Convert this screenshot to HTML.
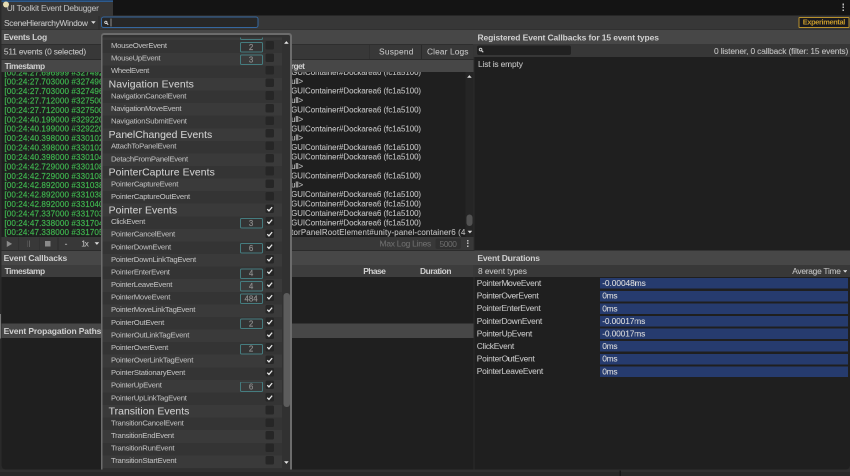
<!DOCTYPE html>
<html lang="en"><head><meta charset="utf-8"><title>UI Toolkit Event Debugger</title>
<style>
html,body{margin:0;padding:0;background:#2a2a2a;overflow:hidden;}
body{width:850px;height:476px;position:relative;overflow:hidden;font-family:"Liberation Sans",sans-serif;}
div,span.t,svg{position:absolute;display:block;}
span.t{white-space:pre;}
#root{left:0;top:0;width:1700px;height:952px;overflow:hidden;transform-origin:0 0;transform:scale(0.5);will-change:transform;}
</style></head><body>
<div id="root">
<div style="left:0.00px;top:0.00px;width:1700.00px;height:952.00px;background:#2a2a2a;"></div>
<div style="left:2.60px;top:0.00px;width:1697.40px;height:31.00px;background:#141414;"></div>
<div style="left:2.80px;top:31.00px;width:1697.20px;height:908.20px;background:#373737;border-radius:0.00px 0.00px 8.00px 8.00px;"></div>
<div style="left:2.80px;top:0.00px;width:223.60px;height:32.00px;background:#373737;"></div>
<div style="left:2.80px;top:0.00px;width:223.60px;height:4.00px;background:#2e5b8d;"></div>
<div style="left:2.80px;top:0.00px;width:223.60px;height:1.30px;background:#1c3350;"></div>
<span class="t" style="left:13.40px;top:5.38px;font-size:16.80px;line-height:24px;color:#bcbcbc;letter-spacing:-0.428px;-webkit-text-stroke:0.14px #bcbcbc;">UI Toolkit Event Debugger</span>
<div style="left:6.20px;top:3.00px;width:12.00px;height:12.00px;background:#e6dcb3;border-radius:50%;"></div>
<div style="left:1684.60px;top:7.40px;width:3.20px;height:3.20px;background:#bdbdbd;"></div>
<div style="left:1684.60px;top:13.00px;width:3.20px;height:3.20px;background:#bdbdbd;"></div>
<div style="left:1684.60px;top:18.60px;width:3.20px;height:3.20px;background:#bdbdbd;"></div>
<div style="left:0.00px;top:628.40px;width:2.20px;height:48.40px;background:#7a7a7a;"></div>
<span class="t" style="left:8.00px;top:34.78px;font-size:16.80px;line-height:24px;color:#c4c4c4;letter-spacing:-0.593px;-webkit-text-stroke:0.14px #c4c4c4;">SceneHierarchyWindow</span>
<svg style="left:181.60px;top:42.20px" width="9.60" height="6.00" viewBox="0 0 10 6"><path d="M0.2 0.3h9.6L5 5.9z" fill="#dcdcdc"/></svg>
<div style="left:196.80px;top:32.00px;width:1.80px;height:26.80px;background:#2b2b2b;"></div>
<div style="left:202.00px;top:33.10px;width:315.40px;height:22.70px;background:#272727;border:2.40px solid #35679f;box-sizing:border-box;border-radius:5.20px;"></div>
<svg style="left:207.60px;top:41.20px" width="9.20" height="9.20" viewBox="0 0 10 10"><circle cx="4" cy="4" r="2.5" fill="none" stroke="#e0e0e0" stroke-width="1.9"/><path d="M6 6L9.2 9.2" stroke="#e0e0e0" stroke-width="2.2"/></svg>
<div style="left:221.00px;top:36.60px;width:2.20px;height:16.80px;background:#8c8c8c;"></div>
<div style="left:1597.40px;top:34.00px;width:101.60px;height:21.60px;background:#17181f;border:2.00px solid #b8912c;box-sizing:border-box;border-radius:2.00px;"></div>
<span class="t" style="left:1605.60px;top:34.09px;font-size:14.80px;line-height:21px;color:#c79a2a;letter-spacing:-0.723px;font-weight:bold;">Experimental</span>
<div style="left:2.80px;top:59.00px;width:1697.20px;height:1.60px;background:#292929;"></div>
<div style="left:2.80px;top:60.40px;width:944.80px;height:28.00px;background:#474747;"></div>
<span class="t" style="left:7.20px;top:63.05px;font-size:17.00px;line-height:24px;color:#d0d0d0;letter-spacing:-0.492px;font-weight:bold;">Events Log</span>
<div style="left:2.80px;top:88.40px;width:944.80px;height:30.80px;background:#383838;"></div>
<div style="left:2.80px;top:88.40px;width:944.80px;height:1.40px;background:#2e2e2e;"></div>
<span class="t" style="left:7.80px;top:92.38px;font-size:16.80px;line-height:24px;color:#c4c4c4;letter-spacing:-0.391px;-webkit-text-stroke:0.14px #c4c4c4;">511 events (0 selected)</span>
<div style="left:738.60px;top:89.60px;width:1.80px;height:28.80px;background:#2a2a2a;"></div>
<div style="left:842.40px;top:89.60px;width:1.80px;height:28.80px;background:#2a2a2a;"></div>
<span class="t" style="left:758.00px;top:92.18px;font-size:16.80px;line-height:24px;color:#c4c4c4;letter-spacing:0.446px;-webkit-text-stroke:0.14px #c4c4c4;">Suspend</span>
<span class="t" style="left:854.00px;top:92.18px;font-size:16.80px;line-height:24px;color:#c4c4c4;letter-spacing:0.195px;-webkit-text-stroke:0.14px #c4c4c4;">Clear Logs</span>
<div style="left:2.80px;top:119.20px;width:944.80px;height:24.80px;background:#474747;"></div>
<div style="left:2.80px;top:118.40px;width:944.80px;height:1.60px;background:#2a2a2a;"></div>
<span class="t" style="left:9.20px;top:120.58px;font-size:16.80px;line-height:24px;color:#d0d0d0;letter-spacing:-0.899px;font-weight:bold;">Timestamp</span>
<span class="t" style="left:565.20px;top:120.58px;font-size:16.80px;line-height:24px;color:#d0d0d0;letter-spacing:-1.060px;font-weight:bold;">Target</span>
<div id="log" style="left:2.80px;top:144.00px;width:944.80px;height:329.80px;background:#1f1f1f;overflow:hidden;">
<span class="t" style="left:6.00px;top:-10.49px;font-size:16.20px;line-height:23px;color:#3fb54f;letter-spacing:0.205px;-webkit-text-stroke:0.34px #3fb54f;">[00:24:27.696999 #327492] MouseMoveEvent</span>
<span class="t" style="left:561.96px;top:-10.42px;font-size:15.80px;line-height:22px;color:#bdbdbd;letter-spacing:-0.054px;-webkit-text-stroke:0.24px #bdbdbd;">IMGUIContainer#Dockarea6 (fc1a5100)</span>
<span class="t" style="left:6.00px;top:8.33px;font-size:16.20px;line-height:23px;color:#3fb54f;letter-spacing:0.205px;-webkit-text-stroke:0.34px #3fb54f;">[00:24:27.703000 #327496] PointerMoveEvent</span>
<span class="t" style="left:562.08px;top:8.40px;font-size:15.80px;line-height:22px;color:#bdbdbd;letter-spacing:-0.345px;-webkit-text-stroke:0.24px #bdbdbd;">&lt;null&gt;</span>
<span class="t" style="left:6.00px;top:27.15px;font-size:16.20px;line-height:23px;color:#3fb54f;letter-spacing:0.205px;-webkit-text-stroke:0.34px #3fb54f;">[00:24:27.703000 #327496] MouseMoveEvent</span>
<span class="t" style="left:561.96px;top:27.22px;font-size:15.80px;line-height:22px;color:#bdbdbd;letter-spacing:-0.054px;-webkit-text-stroke:0.24px #bdbdbd;">IMGUIContainer#Dockarea6 (fc1a5100)</span>
<span class="t" style="left:6.00px;top:45.97px;font-size:16.20px;line-height:23px;color:#3fb54f;letter-spacing:0.205px;-webkit-text-stroke:0.34px #3fb54f;">[00:24:27.712000 #327500] PointerMoveEvent</span>
<span class="t" style="left:562.08px;top:46.04px;font-size:15.80px;line-height:22px;color:#bdbdbd;letter-spacing:-0.345px;-webkit-text-stroke:0.24px #bdbdbd;">&lt;null&gt;</span>
<span class="t" style="left:6.00px;top:64.79px;font-size:16.20px;line-height:23px;color:#3fb54f;letter-spacing:0.205px;-webkit-text-stroke:0.34px #3fb54f;">[00:24:27.712000 #327500] MouseMoveEvent</span>
<span class="t" style="left:561.96px;top:64.86px;font-size:15.80px;line-height:22px;color:#bdbdbd;letter-spacing:-0.054px;-webkit-text-stroke:0.24px #bdbdbd;">IMGUIContainer#Dockarea6 (fc1a5100)</span>
<span class="t" style="left:6.00px;top:83.61px;font-size:16.20px;line-height:23px;color:#3fb54f;letter-spacing:0.205px;-webkit-text-stroke:0.34px #3fb54f;">[00:24:40.199000 #329220] PointerMoveEvent</span>
<span class="t" style="left:562.08px;top:83.68px;font-size:15.80px;line-height:22px;color:#bdbdbd;letter-spacing:-0.345px;-webkit-text-stroke:0.24px #bdbdbd;">&lt;null&gt;</span>
<span class="t" style="left:6.00px;top:102.43px;font-size:16.20px;line-height:23px;color:#3fb54f;letter-spacing:0.205px;-webkit-text-stroke:0.34px #3fb54f;">[00:24:40.199000 #329220] MouseMoveEvent</span>
<span class="t" style="left:561.96px;top:102.50px;font-size:15.80px;line-height:22px;color:#bdbdbd;letter-spacing:-0.054px;-webkit-text-stroke:0.24px #bdbdbd;">IMGUIContainer#Dockarea6 (fc1a5100)</span>
<span class="t" style="left:6.00px;top:121.25px;font-size:16.20px;line-height:23px;color:#3fb54f;letter-spacing:0.205px;-webkit-text-stroke:0.34px #3fb54f;">[00:24:40.398000 #330102] PointerMoveEvent</span>
<span class="t" style="left:562.08px;top:121.32px;font-size:15.80px;line-height:22px;color:#bdbdbd;letter-spacing:-0.345px;-webkit-text-stroke:0.24px #bdbdbd;">&lt;null&gt;</span>
<span class="t" style="left:6.00px;top:140.07px;font-size:16.20px;line-height:23px;color:#3fb54f;letter-spacing:0.205px;-webkit-text-stroke:0.34px #3fb54f;">[00:24:40.398000 #330102] MouseMoveEvent</span>
<span class="t" style="left:561.96px;top:140.14px;font-size:15.80px;line-height:22px;color:#bdbdbd;letter-spacing:-0.054px;-webkit-text-stroke:0.24px #bdbdbd;">IMGUIContainer#Dockarea6 (fc1a5100)</span>
<span class="t" style="left:6.00px;top:158.89px;font-size:16.20px;line-height:23px;color:#3fb54f;letter-spacing:0.205px;-webkit-text-stroke:0.34px #3fb54f;">[00:24:40.398000 #330104] MouseLeaveWindowEvent</span>
<span class="t" style="left:561.96px;top:158.96px;font-size:15.80px;line-height:22px;color:#bdbdbd;letter-spacing:-0.054px;-webkit-text-stroke:0.24px #bdbdbd;">IMGUIContainer#Dockarea6 (fc1a5100)</span>
<span class="t" style="left:6.00px;top:177.71px;font-size:16.20px;line-height:23px;color:#3fb54f;letter-spacing:0.205px;-webkit-text-stroke:0.34px #3fb54f;">[00:24:42.729000 #330108] PointerMoveEvent</span>
<span class="t" style="left:562.08px;top:177.78px;font-size:15.80px;line-height:22px;color:#bdbdbd;letter-spacing:-0.345px;-webkit-text-stroke:0.24px #bdbdbd;">&lt;null&gt;</span>
<span class="t" style="left:6.00px;top:196.53px;font-size:16.20px;line-height:23px;color:#3fb54f;letter-spacing:0.205px;-webkit-text-stroke:0.34px #3fb54f;">[00:24:42.729000 #330108] MouseMoveEvent</span>
<span class="t" style="left:561.96px;top:196.60px;font-size:15.80px;line-height:22px;color:#bdbdbd;letter-spacing:-0.054px;-webkit-text-stroke:0.24px #bdbdbd;">IMGUIContainer#Dockarea6 (fc1a5100)</span>
<span class="t" style="left:6.00px;top:215.35px;font-size:16.20px;line-height:23px;color:#3fb54f;letter-spacing:0.205px;-webkit-text-stroke:0.34px #3fb54f;">[00:24:42.892000 #331038] PointerMoveEvent</span>
<span class="t" style="left:562.08px;top:215.42px;font-size:15.80px;line-height:22px;color:#bdbdbd;letter-spacing:-0.345px;-webkit-text-stroke:0.24px #bdbdbd;">&lt;null&gt;</span>
<span class="t" style="left:6.00px;top:234.17px;font-size:16.20px;line-height:23px;color:#3fb54f;letter-spacing:0.205px;-webkit-text-stroke:0.34px #3fb54f;">[00:24:42.892000 #331038] MouseMoveEvent</span>
<span class="t" style="left:561.96px;top:234.24px;font-size:15.80px;line-height:22px;color:#bdbdbd;letter-spacing:-0.054px;-webkit-text-stroke:0.24px #bdbdbd;">IMGUIContainer#Dockarea6 (fc1a5100)</span>
<span class="t" style="left:6.00px;top:252.99px;font-size:16.20px;line-height:23px;color:#3fb54f;letter-spacing:0.205px;-webkit-text-stroke:0.34px #3fb54f;">[00:24:42.892000 #331040] MouseLeaveWindowEvent</span>
<span class="t" style="left:561.96px;top:253.06px;font-size:15.80px;line-height:22px;color:#bdbdbd;letter-spacing:-0.054px;-webkit-text-stroke:0.24px #bdbdbd;">IMGUIContainer#Dockarea6 (fc1a5100)</span>
<span class="t" style="left:6.00px;top:271.81px;font-size:16.20px;line-height:23px;color:#3fb54f;letter-spacing:0.205px;-webkit-text-stroke:0.34px #3fb54f;">[00:24:47.337000 #331703] MouseEnterWindowEvent</span>
<span class="t" style="left:561.96px;top:271.88px;font-size:15.80px;line-height:22px;color:#bdbdbd;letter-spacing:-0.054px;-webkit-text-stroke:0.24px #bdbdbd;">IMGUIContainer#Dockarea6 (fc1a5100)</span>
<span class="t" style="left:6.00px;top:290.63px;font-size:16.20px;line-height:23px;color:#3fb54f;letter-spacing:0.205px;-webkit-text-stroke:0.34px #3fb54f;">[00:24:47.338000 #331704] MouseMoveEvent</span>
<span class="t" style="left:561.96px;top:290.70px;font-size:15.80px;line-height:22px;color:#bdbdbd;letter-spacing:-0.054px;-webkit-text-stroke:0.24px #bdbdbd;">IMGUIContainer#Dockarea6 (fc1a5100)</span>
<span class="t" style="left:6.00px;top:309.45px;font-size:16.20px;line-height:23px;color:#3fb54f;letter-spacing:0.205px;-webkit-text-stroke:0.34px #3fb54f;">[00:24:47.338000 #331705] PointerOverEvent</span>
<span class="t" style="left:555.55px;top:309.52px;font-size:15.80px;line-height:22px;color:#bdbdbd;letter-spacing:0.337px;-webkit-text-stroke:0.24px #bdbdbd;">EditorPanelRootElement#unity-panel-container6 (4f2a9c00)</span>
<div style="left:927.80px;top:0.00px;width:17.00px;height:329.80px;background:#252525;"></div>
<div style="left:930.00px;top:285.20px;width:12.40px;height:22.40px;background:#525252;border-radius:6.20px;"></div>
<svg style="left:931.60px;top:6.40px" width="9.60" height="6.00" viewBox="0 0 10 6"><path d="M0.2 5.7h9.6L5 0.1z" fill="#dcdcdc"/></svg>
<svg style="left:931.80px;top:316.60px" width="9.60" height="6.00" viewBox="0 0 10 6"><path d="M0.2 0.3h9.6L5 5.9z" fill="#dcdcdc"/></svg>
</div>
<div style="left:2.80px;top:474.00px;width:944.80px;height:27.00px;background:#383838;"></div>
<div style="left:36.60px;top:474.60px;width:1.80px;height:26.00px;background:#2c2c2c;"></div>
<div style="left:77.60px;top:474.60px;width:1.80px;height:26.00px;background:#2c2c2c;"></div>
<div style="left:114.80px;top:474.60px;width:1.80px;height:26.00px;background:#2c2c2c;"></div>
<svg style="left:13.20px;top:480.80px" width="11.60" height="13.60" viewBox="0 0 6 7"><path d="M0.3 0.3L5.8 3.5L0.3 6.7z" fill="#8a8a8a"/></svg>
<div style="left:53.70px;top:481.00px;width:1.80px;height:13.20px;background:#606060;"></div>
<div style="left:58.30px;top:481.00px;width:1.80px;height:13.20px;background:#606060;"></div>
<div style="left:90.40px;top:482.40px;width:10.20px;height:10.20px;background:#8a8a8a;"></div>
<span class="t" style="left:129.20px;top:475.58px;font-size:16.80px;line-height:24px;color:#bdbdbd;-webkit-text-stroke:0.14px #bdbdbd;">-</span>
<span class="t" style="left:162.40px;top:476.38px;font-size:16.80px;line-height:24px;color:#c0c0c0;letter-spacing:-2.544px;-webkit-text-stroke:0.14px #c0c0c0;">1x</span>
<svg style="left:189.20px;top:484.40px" width="9.60" height="6.00" viewBox="0 0 10 6"><path d="M0.2 0.3h9.6L5 5.9z" fill="#dcdcdc"/></svg>
<span class="t" style="left:759.20px;top:476.38px;font-size:16.80px;line-height:24px;color:#6e6e6e;letter-spacing:-0.489px;-webkit-text-stroke:0.14px #6e6e6e;">Max Log Lines</span>
<div style="left:871.20px;top:476.80px;width:50.40px;height:20.80px;background:#303030;border-radius:4.00px;"></div>
<span class="t" style="left:878.90px;top:476.58px;font-size:16.80px;line-height:24px;color:#6a6a6a;letter-spacing:-0.792px;-webkit-text-stroke:0.14px #6a6a6a;">5000</span>
<div style="left:934.00px;top:479.60px;width:3.20px;height:3.20px;background:#bdbdbd;"></div>
<div style="left:934.00px;top:485.20px;width:3.20px;height:3.20px;background:#bdbdbd;"></div>
<div style="left:934.00px;top:490.80px;width:3.20px;height:3.20px;background:#bdbdbd;"></div>
<div style="left:2.80px;top:500.20px;width:1697.20px;height:1.60px;background:#2b2b2b;"></div>
<div style="left:2.80px;top:501.60px;width:944.80px;height:28.20px;background:#474747;"></div>
<span class="t" style="left:7.20px;top:504.85px;font-size:17.00px;line-height:24px;color:#d0d0d0;letter-spacing:-0.229px;font-weight:bold;">Event Callbacks</span>
<div style="left:2.80px;top:529.80px;width:944.80px;height:23.80px;background:#3d3d3d;"></div>
<span class="t" style="left:9.20px;top:530.78px;font-size:16.80px;line-height:24px;color:#d0d0d0;letter-spacing:-0.899px;font-weight:bold;">Timestamp</span>
<span class="t" style="left:726.40px;top:531.38px;font-size:16.80px;line-height:24px;color:#d0d0d0;letter-spacing:-1.025px;font-weight:bold;">Phase</span>
<span class="t" style="left:840.00px;top:531.38px;font-size:16.80px;line-height:24px;color:#d0d0d0;letter-spacing:-0.866px;font-weight:bold;">Duration</span>
<div style="left:2.80px;top:553.60px;width:944.80px;height:93.20px;background:#1f1f1f;"></div>
<div style="left:2.80px;top:646.80px;width:944.80px;height:29.20px;background:#474747;"></div>
<span class="t" style="left:7.20px;top:650.85px;font-size:17.00px;line-height:24px;color:#d0d0d0;letter-spacing:-0.255px;font-weight:bold;">Event Propagation Paths</span>
<div style="left:2.80px;top:676.00px;width:944.80px;height:263.20px;background:#1f1f1f;border-radius:0.00px 0.00px 0.00px 8.00px;"></div>
<div style="left:946.60px;top:60.40px;width:2.60px;height:878.80px;background:#2b2b2b;"></div>
<div style="left:946.40px;top:60.40px;width:3.00px;height:28.00px;background:#474747;"></div>
<div style="left:946.40px;top:88.40px;width:3.00px;height:25.60px;background:#363636;"></div>
<div style="left:946.40px;top:501.60px;width:3.00px;height:28.20px;background:#474747;"></div>
<div style="left:946.40px;top:529.80px;width:3.00px;height:23.80px;background:#393939;"></div>
<div style="left:949.00px;top:60.40px;width:751.00px;height:28.00px;background:#474747;"></div>
<span class="t" style="left:955.00px;top:63.85px;font-size:17.00px;line-height:24px;color:#d0d0d0;letter-spacing:-0.211px;font-weight:bold;">Registered Event Callbacks for 15 event types</span>
<div style="left:949.00px;top:88.40px;width:751.00px;height:25.60px;background:#373737;"></div>
<div style="left:954.00px;top:90.60px;width:188.00px;height:19.20px;background:#212121;border-radius:4.00px;"></div>
<svg style="left:957.20px;top:95.40px" width="10.40" height="10.40" viewBox="0 0 10 10"><circle cx="4" cy="4" r="2.5" fill="none" stroke="#d6d6d6" stroke-width="1.9"/><path d="M6 6L9.2 9.2" stroke="#d6d6d6" stroke-width="2.2"/></svg>
<span class="t" style="left:1428.00px;top:90.78px;font-size:16.80px;line-height:24px;color:#c4c4c4;letter-spacing:-0.299px;-webkit-text-stroke:0.14px #c4c4c4;">0 listener, 0 callback (filter: 15 events)</span>
<div style="left:949.00px;top:114.00px;width:751.00px;height:387.00px;background:#1f1f1f;"></div>
<span class="t" style="left:956.00px;top:117.18px;font-size:16.80px;line-height:24px;color:#c4c4c4;letter-spacing:-0.280px;-webkit-text-stroke:0.14px #c4c4c4;">List is empty</span>
<div style="left:949.00px;top:500.80px;width:751.00px;height:29.00px;background:#474747;"></div>
<span class="t" style="left:954.80px;top:505.25px;font-size:17.00px;line-height:24px;color:#d0d0d0;letter-spacing:-0.369px;font-weight:bold;">Event Durations</span>
<div style="left:949.00px;top:529.80px;width:751.00px;height:23.80px;background:#383838;"></div>
<span class="t" style="left:956.00px;top:531.38px;font-size:16.80px;line-height:24px;color:#c4c4c4;letter-spacing:-0.161px;-webkit-text-stroke:0.14px #c4c4c4;">8 event types</span>
<span class="t" style="left:1584.40px;top:531.38px;font-size:16.80px;line-height:24px;color:#c4c4c4;letter-spacing:-0.522px;-webkit-text-stroke:0.14px #c4c4c4;">Average Time</span>
<svg style="left:1685.60px;top:539.60px" width="8.80" height="5.60" viewBox="0 0 10 6"><path d="M0.2 0.3h9.6L5 5.9z" fill="#dcdcdc"/></svg>
<div style="left:949.00px;top:553.60px;width:751.00px;height:385.60px;background:#1f1f1f;border-radius:0.00px 0.00px 8.00px 0.00px;"></div>
<span class="t" style="left:953.60px;top:554.98px;font-size:16.80px;line-height:24px;color:#c4c4c4;letter-spacing:-0.552px;-webkit-text-stroke:0.14px #c4c4c4;">PointerMoveEvent</span>
<div style="left:1199.80px;top:556.40px;width:496.60px;height:21.10px;background:#263b6e;"></div>
<span class="t" style="left:1204.40px;top:555.18px;font-size:16.80px;line-height:24px;color:#dcdcdc;letter-spacing:-0.147px;-webkit-text-stroke:0.14px #dcdcdc;">-0.00048ms</span>
<span class="t" style="left:953.60px;top:580.18px;font-size:16.80px;line-height:24px;color:#c4c4c4;letter-spacing:-0.573px;-webkit-text-stroke:0.14px #c4c4c4;">PointerOverEvent</span>
<div style="left:1199.80px;top:581.60px;width:496.60px;height:21.10px;background:#263b6e;"></div>
<span class="t" style="left:1204.40px;top:580.38px;font-size:16.80px;line-height:24px;color:#dcdcdc;letter-spacing:-0.469px;-webkit-text-stroke:0.14px #dcdcdc;">0ms</span>
<span class="t" style="left:953.60px;top:605.38px;font-size:16.80px;line-height:24px;color:#c4c4c4;letter-spacing:-0.522px;-webkit-text-stroke:0.14px #c4c4c4;">PointerEnterEvent</span>
<div style="left:1199.80px;top:606.80px;width:496.60px;height:21.10px;background:#263b6e;"></div>
<span class="t" style="left:1204.40px;top:605.58px;font-size:16.80px;line-height:24px;color:#dcdcdc;letter-spacing:-0.469px;-webkit-text-stroke:0.14px #dcdcdc;">0ms</span>
<span class="t" style="left:953.60px;top:630.58px;font-size:16.80px;line-height:24px;color:#c4c4c4;letter-spacing:-0.543px;-webkit-text-stroke:0.14px #c4c4c4;">PointerDownEvent</span>
<div style="left:1199.80px;top:632.00px;width:496.60px;height:21.10px;background:#263b6e;"></div>
<span class="t" style="left:1204.40px;top:630.78px;font-size:16.80px;line-height:24px;color:#dcdcdc;letter-spacing:-0.258px;-webkit-text-stroke:0.14px #dcdcdc;">-0.00017ms</span>
<span class="t" style="left:953.60px;top:655.78px;font-size:16.80px;line-height:24px;color:#c4c4c4;letter-spacing:-0.513px;-webkit-text-stroke:0.14px #c4c4c4;">PointerUpEvent</span>
<div style="left:1199.80px;top:657.20px;width:496.60px;height:21.10px;background:#263b6e;"></div>
<span class="t" style="left:1204.40px;top:655.98px;font-size:16.80px;line-height:24px;color:#dcdcdc;letter-spacing:-0.258px;-webkit-text-stroke:0.14px #dcdcdc;">-0.00017ms</span>
<span class="t" style="left:953.60px;top:680.98px;font-size:16.80px;line-height:24px;color:#c4c4c4;letter-spacing:-0.484px;-webkit-text-stroke:0.14px #c4c4c4;">ClickEvent</span>
<div style="left:1199.80px;top:682.40px;width:496.60px;height:21.10px;background:#263b6e;"></div>
<span class="t" style="left:1204.40px;top:681.18px;font-size:16.80px;line-height:24px;color:#dcdcdc;letter-spacing:-0.469px;-webkit-text-stroke:0.14px #dcdcdc;">0ms</span>
<span class="t" style="left:953.60px;top:706.18px;font-size:16.80px;line-height:24px;color:#c4c4c4;letter-spacing:-0.519px;-webkit-text-stroke:0.14px #c4c4c4;">PointerOutEvent</span>
<div style="left:1199.80px;top:707.60px;width:496.60px;height:21.10px;background:#263b6e;"></div>
<span class="t" style="left:1204.40px;top:706.38px;font-size:16.80px;line-height:24px;color:#dcdcdc;letter-spacing:-0.469px;-webkit-text-stroke:0.14px #dcdcdc;">0ms</span>
<span class="t" style="left:953.60px;top:731.38px;font-size:16.80px;line-height:24px;color:#c4c4c4;letter-spacing:-0.560px;-webkit-text-stroke:0.14px #c4c4c4;">PointerLeaveEvent</span>
<div style="left:1199.80px;top:732.80px;width:496.60px;height:21.10px;background:#263b6e;"></div>
<span class="t" style="left:1204.40px;top:731.58px;font-size:16.80px;line-height:24px;color:#dcdcdc;letter-spacing:-0.469px;-webkit-text-stroke:0.14px #dcdcdc;">0ms</span>
<div id="popclip" style="left:0.00px;top:0.00px;width:1700.00px;height:939.20px;overflow:hidden;">
<div style="left:201.80px;top:66.20px;width:381.80px;height:920.00px;background:#6c6c6c;border-radius:6.40px;"></div>
<div id="pop" style="left:205.40px;top:69.80px;width:374.60px;height:900.00px;overflow:hidden;background:#313131;border-radius:3.20px;">
<div id="popscroll" style="left:0.00px;top:4.80px;width:374.60px;height:861.60px;overflow:hidden;">
<div style="left:0.00px;top:-19.36px;width:358.60px;height:25.26px;background:#3a3a3a;"></div>
<span class="t" style="left:16.60px;top:-19.66px;font-size:15.40px;line-height:22px;color:#bcbcbc;letter-spacing:-0.531px;-webkit-text-stroke:0.12px #bcbcbc;">MouseMoveEvent</span>
<div style="left:275.00px;top:-15.96px;width:45.60px;height:20.90px;background:transparent;border:2.00px solid #457c7f;box-sizing:border-box;border-radius:3.20px;"></div>
<span class="t" style="left:288.01px;top:-16.22px;font-size:15.80px;line-height:22px;color:#909090;-webkit-text-stroke:0.32px #909090;">12</span>
<div style="left:325.20px;top:-17.96px;width:17.00px;height:17.20px;background:#262626;border-radius:3.00px;"></div>
<div style="left:0.00px;top:5.80px;width:358.60px;height:25.26px;background:#343434;"></div>
<span class="t" style="left:16.60px;top:5.50px;font-size:15.40px;line-height:22px;color:#bcbcbc;letter-spacing:-0.537px;-webkit-text-stroke:0.12px #bcbcbc;">MouseOverEvent</span>
<div style="left:275.00px;top:9.20px;width:45.60px;height:20.90px;background:transparent;border:2.00px solid #457c7f;box-sizing:border-box;border-radius:3.20px;"></div>
<span class="t" style="left:292.41px;top:8.94px;font-size:15.80px;line-height:22px;color:#909090;-webkit-text-stroke:0.32px #909090;">2</span>
<div style="left:325.20px;top:7.20px;width:17.00px;height:17.20px;background:#262626;border-radius:3.00px;"></div>
<div style="left:0.00px;top:30.96px;width:358.60px;height:25.26px;background:#3a3a3a;"></div>
<span class="t" style="left:16.60px;top:30.66px;font-size:15.40px;line-height:22px;color:#bcbcbc;letter-spacing:-0.572px;-webkit-text-stroke:0.12px #bcbcbc;">MouseUpEvent</span>
<div style="left:275.00px;top:34.36px;width:45.60px;height:20.90px;background:transparent;border:2.00px solid #457c7f;box-sizing:border-box;border-radius:3.20px;"></div>
<span class="t" style="left:292.41px;top:34.10px;font-size:15.80px;line-height:22px;color:#909090;-webkit-text-stroke:0.32px #909090;">3</span>
<div style="left:325.20px;top:32.36px;width:17.00px;height:17.20px;background:#262626;border-radius:3.00px;"></div>
<div style="left:0.00px;top:56.12px;width:358.60px;height:25.26px;background:#343434;"></div>
<span class="t" style="left:16.60px;top:55.82px;font-size:15.40px;line-height:22px;color:#bcbcbc;letter-spacing:-0.715px;-webkit-text-stroke:0.12px #bcbcbc;">WheelEvent</span>
<div style="left:325.20px;top:57.52px;width:17.00px;height:17.20px;background:#262626;border-radius:3.00px;"></div>
<div style="left:0.00px;top:81.28px;width:358.60px;height:25.26px;background:#3a3a3a;"></div>
<span class="t" style="left:11.80px;top:78.74px;font-size:20.80px;line-height:29px;color:#cfcfcf;letter-spacing:0.184px;-webkit-text-stroke:0.14px #cfcfcf;">Navigation Events</span>
<div style="left:325.20px;top:82.68px;width:17.00px;height:17.20px;background:#262626;border-radius:3.00px;"></div>
<div style="left:0.00px;top:106.44px;width:358.60px;height:25.26px;background:#343434;"></div>
<span class="t" style="left:16.60px;top:106.14px;font-size:15.40px;line-height:22px;color:#bcbcbc;letter-spacing:-0.454px;-webkit-text-stroke:0.12px #bcbcbc;">NavigationCancelEvent</span>
<div style="left:325.20px;top:107.84px;width:17.00px;height:17.20px;background:#262626;border-radius:3.00px;"></div>
<div style="left:0.00px;top:131.60px;width:358.60px;height:25.26px;background:#3a3a3a;"></div>
<span class="t" style="left:16.60px;top:131.30px;font-size:15.40px;line-height:22px;color:#bcbcbc;letter-spacing:-0.478px;-webkit-text-stroke:0.12px #bcbcbc;">NavigationMoveEvent</span>
<div style="left:325.20px;top:133.00px;width:17.00px;height:17.20px;background:#262626;border-radius:3.00px;"></div>
<div style="left:0.00px;top:156.76px;width:358.60px;height:25.26px;background:#343434;"></div>
<span class="t" style="left:16.60px;top:156.46px;font-size:15.40px;line-height:22px;color:#bcbcbc;letter-spacing:-0.404px;-webkit-text-stroke:0.12px #bcbcbc;">NavigationSubmitEvent</span>
<div style="left:325.20px;top:158.16px;width:17.00px;height:17.20px;background:#262626;border-radius:3.00px;"></div>
<div style="left:0.00px;top:181.92px;width:358.60px;height:25.26px;background:#3a3a3a;"></div>
<span class="t" style="left:11.80px;top:179.38px;font-size:20.80px;line-height:29px;color:#cfcfcf;letter-spacing:0.011px;-webkit-text-stroke:0.14px #cfcfcf;">PanelChanged Events</span>
<div style="left:325.20px;top:183.32px;width:17.00px;height:17.20px;background:#262626;border-radius:3.00px;"></div>
<div style="left:0.00px;top:207.08px;width:358.60px;height:25.26px;background:#343434;"></div>
<span class="t" style="left:16.60px;top:206.78px;font-size:15.40px;line-height:22px;color:#bcbcbc;letter-spacing:-0.457px;-webkit-text-stroke:0.12px #bcbcbc;">AttachToPanelEvent</span>
<div style="left:325.20px;top:208.48px;width:17.00px;height:17.20px;background:#262626;border-radius:3.00px;"></div>
<div style="left:0.00px;top:232.24px;width:358.60px;height:25.26px;background:#3a3a3a;"></div>
<span class="t" style="left:16.60px;top:231.94px;font-size:15.40px;line-height:22px;color:#bcbcbc;letter-spacing:-0.482px;-webkit-text-stroke:0.12px #bcbcbc;">DetachFromPanelEvent</span>
<div style="left:325.20px;top:233.64px;width:17.00px;height:17.20px;background:#262626;border-radius:3.00px;"></div>
<div style="left:0.00px;top:257.40px;width:358.60px;height:25.26px;background:#343434;"></div>
<span class="t" style="left:11.80px;top:254.86px;font-size:20.80px;line-height:29px;color:#cfcfcf;letter-spacing:0.156px;-webkit-text-stroke:0.14px #cfcfcf;">PointerCapture Events</span>
<div style="left:325.20px;top:258.80px;width:17.00px;height:17.20px;background:#262626;border-radius:3.00px;"></div>
<div style="left:0.00px;top:282.56px;width:358.60px;height:25.26px;background:#3a3a3a;"></div>
<span class="t" style="left:16.60px;top:282.26px;font-size:15.40px;line-height:22px;color:#bcbcbc;letter-spacing:-0.445px;-webkit-text-stroke:0.12px #bcbcbc;">PointerCaptureEvent</span>
<div style="left:325.20px;top:283.96px;width:17.00px;height:17.20px;background:#262626;border-radius:3.00px;"></div>
<div style="left:0.00px;top:307.72px;width:358.60px;height:25.26px;background:#343434;"></div>
<span class="t" style="left:16.60px;top:307.42px;font-size:15.40px;line-height:22px;color:#bcbcbc;letter-spacing:-0.447px;-webkit-text-stroke:0.12px #bcbcbc;">PointerCaptureOutEvent</span>
<div style="left:325.20px;top:309.12px;width:17.00px;height:17.20px;background:#262626;border-radius:3.00px;"></div>
<div style="left:0.00px;top:332.88px;width:358.60px;height:25.26px;background:#3a3a3a;"></div>
<span class="t" style="left:11.80px;top:330.34px;font-size:20.80px;line-height:29px;color:#cfcfcf;letter-spacing:0.133px;-webkit-text-stroke:0.14px #cfcfcf;">Pointer Events</span>
<div style="left:325.20px;top:334.28px;width:17.00px;height:17.20px;background:#262626;border-radius:3.00px;"></div>
<svg style="left:327.40px;top:337.08px" width="12.80" height="12.00" viewBox="0 0 68 64"><path d="M8 34L26 52L60 12" fill="none" stroke="#e6e6e6" stroke-width="14"/></svg>
<div style="left:0.00px;top:358.04px;width:358.60px;height:25.26px;background:#343434;"></div>
<span class="t" style="left:16.60px;top:357.74px;font-size:15.40px;line-height:22px;color:#bcbcbc;letter-spacing:-0.453px;-webkit-text-stroke:0.12px #bcbcbc;">ClickEvent</span>
<div style="left:275.00px;top:361.44px;width:45.60px;height:20.90px;background:transparent;border:2.00px solid #457c7f;box-sizing:border-box;border-radius:3.20px;"></div>
<span class="t" style="left:292.41px;top:361.18px;font-size:15.80px;line-height:22px;color:#909090;-webkit-text-stroke:0.32px #909090;">3</span>
<div style="left:325.20px;top:359.44px;width:17.00px;height:17.20px;background:#262626;border-radius:3.00px;"></div>
<svg style="left:327.40px;top:362.24px" width="12.80" height="12.00" viewBox="0 0 68 64"><path d="M8 34L26 52L60 12" fill="none" stroke="#e6e6e6" stroke-width="14"/></svg>
<div style="left:0.00px;top:383.20px;width:358.60px;height:25.26px;background:#3a3a3a;"></div>
<span class="t" style="left:16.60px;top:382.90px;font-size:15.40px;line-height:22px;color:#bcbcbc;letter-spacing:-0.448px;-webkit-text-stroke:0.12px #bcbcbc;">PointerCancelEvent</span>
<div style="left:325.20px;top:384.60px;width:17.00px;height:17.20px;background:#262626;border-radius:3.00px;"></div>
<svg style="left:327.40px;top:387.40px" width="12.80" height="12.00" viewBox="0 0 68 64"><path d="M8 34L26 52L60 12" fill="none" stroke="#e6e6e6" stroke-width="14"/></svg>
<div style="left:0.00px;top:408.36px;width:358.60px;height:25.26px;background:#343434;"></div>
<span class="t" style="left:16.60px;top:408.06px;font-size:15.40px;line-height:22px;color:#bcbcbc;letter-spacing:-0.476px;-webkit-text-stroke:0.12px #bcbcbc;">PointerDownEvent</span>
<div style="left:275.00px;top:411.76px;width:45.60px;height:20.90px;background:transparent;border:2.00px solid #457c7f;box-sizing:border-box;border-radius:3.20px;"></div>
<span class="t" style="left:292.41px;top:411.50px;font-size:15.80px;line-height:22px;color:#909090;-webkit-text-stroke:0.32px #909090;">6</span>
<div style="left:325.20px;top:409.76px;width:17.00px;height:17.20px;background:#262626;border-radius:3.00px;"></div>
<svg style="left:327.40px;top:412.56px" width="12.80" height="12.00" viewBox="0 0 68 64"><path d="M8 34L26 52L60 12" fill="none" stroke="#e6e6e6" stroke-width="14"/></svg>
<div style="left:0.00px;top:433.52px;width:358.60px;height:25.26px;background:#3a3a3a;"></div>
<span class="t" style="left:16.60px;top:433.22px;font-size:15.40px;line-height:22px;color:#bcbcbc;letter-spacing:-0.460px;-webkit-text-stroke:0.12px #bcbcbc;">PointerDownLinkTagEvent</span>
<div style="left:325.20px;top:434.92px;width:17.00px;height:17.20px;background:#262626;border-radius:3.00px;"></div>
<svg style="left:327.40px;top:437.72px" width="12.80" height="12.00" viewBox="0 0 68 64"><path d="M8 34L26 52L60 12" fill="none" stroke="#e6e6e6" stroke-width="14"/></svg>
<div style="left:0.00px;top:458.68px;width:358.60px;height:25.26px;background:#343434;"></div>
<span class="t" style="left:16.60px;top:458.38px;font-size:15.40px;line-height:22px;color:#bcbcbc;letter-spacing:-0.437px;-webkit-text-stroke:0.12px #bcbcbc;">PointerEnterEvent</span>
<div style="left:275.00px;top:462.08px;width:45.60px;height:20.90px;background:transparent;border:2.00px solid #457c7f;box-sizing:border-box;border-radius:3.20px;"></div>
<span class="t" style="left:292.41px;top:461.82px;font-size:15.80px;line-height:22px;color:#909090;-webkit-text-stroke:0.32px #909090;">4</span>
<div style="left:325.20px;top:460.08px;width:17.00px;height:17.20px;background:#262626;border-radius:3.00px;"></div>
<svg style="left:327.40px;top:462.88px" width="12.80" height="12.00" viewBox="0 0 68 64"><path d="M8 34L26 52L60 12" fill="none" stroke="#e6e6e6" stroke-width="14"/></svg>
<div style="left:0.00px;top:483.84px;width:358.60px;height:25.26px;background:#3a3a3a;"></div>
<span class="t" style="left:16.60px;top:483.54px;font-size:15.40px;line-height:22px;color:#bcbcbc;letter-spacing:-0.455px;-webkit-text-stroke:0.12px #bcbcbc;">PointerLeaveEvent</span>
<div style="left:275.00px;top:487.24px;width:45.60px;height:20.90px;background:transparent;border:2.00px solid #457c7f;box-sizing:border-box;border-radius:3.20px;"></div>
<span class="t" style="left:292.41px;top:486.98px;font-size:15.80px;line-height:22px;color:#909090;-webkit-text-stroke:0.32px #909090;">4</span>
<div style="left:325.20px;top:485.24px;width:17.00px;height:17.20px;background:#262626;border-radius:3.00px;"></div>
<svg style="left:327.40px;top:488.04px" width="12.80" height="12.00" viewBox="0 0 68 64"><path d="M8 34L26 52L60 12" fill="none" stroke="#e6e6e6" stroke-width="14"/></svg>
<div style="left:0.00px;top:509.00px;width:358.60px;height:25.26px;background:#343434;"></div>
<span class="t" style="left:16.60px;top:508.70px;font-size:15.40px;line-height:22px;color:#bcbcbc;letter-spacing:-0.470px;-webkit-text-stroke:0.12px #bcbcbc;">PointerMoveEvent</span>
<div style="left:275.00px;top:512.40px;width:45.60px;height:20.90px;background:transparent;border:2.00px solid #457c7f;box-sizing:border-box;border-radius:3.20px;"></div>
<span class="t" style="left:283.62px;top:512.14px;font-size:15.80px;line-height:22px;color:#909090;-webkit-text-stroke:0.32px #909090;">484</span>
<div style="left:325.20px;top:510.40px;width:17.00px;height:17.20px;background:#262626;border-radius:3.00px;"></div>
<svg style="left:327.40px;top:513.20px" width="12.80" height="12.00" viewBox="0 0 68 64"><path d="M8 34L26 52L60 12" fill="none" stroke="#e6e6e6" stroke-width="14"/></svg>
<div style="left:0.00px;top:534.16px;width:358.60px;height:25.26px;background:#3a3a3a;"></div>
<span class="t" style="left:16.60px;top:533.86px;font-size:15.40px;line-height:22px;color:#bcbcbc;letter-spacing:-0.455px;-webkit-text-stroke:0.12px #bcbcbc;">PointerMoveLinkTagEvent</span>
<div style="left:325.20px;top:535.56px;width:17.00px;height:17.20px;background:#262626;border-radius:3.00px;"></div>
<svg style="left:327.40px;top:538.36px" width="12.80" height="12.00" viewBox="0 0 68 64"><path d="M8 34L26 52L60 12" fill="none" stroke="#e6e6e6" stroke-width="14"/></svg>
<div style="left:0.00px;top:559.32px;width:358.60px;height:25.26px;background:#343434;"></div>
<span class="t" style="left:16.60px;top:559.02px;font-size:15.40px;line-height:22px;color:#bcbcbc;letter-spacing:-0.452px;-webkit-text-stroke:0.12px #bcbcbc;">PointerOutEvent</span>
<div style="left:275.00px;top:562.72px;width:45.60px;height:20.90px;background:transparent;border:2.00px solid #457c7f;box-sizing:border-box;border-radius:3.20px;"></div>
<span class="t" style="left:292.41px;top:562.46px;font-size:15.80px;line-height:22px;color:#909090;-webkit-text-stroke:0.32px #909090;">2</span>
<div style="left:325.20px;top:560.72px;width:17.00px;height:17.20px;background:#262626;border-radius:3.00px;"></div>
<svg style="left:327.40px;top:563.52px" width="12.80" height="12.00" viewBox="0 0 68 64"><path d="M8 34L26 52L60 12" fill="none" stroke="#e6e6e6" stroke-width="14"/></svg>
<div style="left:0.00px;top:584.48px;width:358.60px;height:25.26px;background:#3a3a3a;"></div>
<span class="t" style="left:16.60px;top:584.18px;font-size:15.40px;line-height:22px;color:#bcbcbc;letter-spacing:-0.443px;-webkit-text-stroke:0.12px #bcbcbc;">PointerOutLinkTagEvent</span>
<div style="left:325.20px;top:585.88px;width:17.00px;height:17.20px;background:#262626;border-radius:3.00px;"></div>
<svg style="left:327.40px;top:588.68px" width="12.80" height="12.00" viewBox="0 0 68 64"><path d="M8 34L26 52L60 12" fill="none" stroke="#e6e6e6" stroke-width="14"/></svg>
<div style="left:0.00px;top:609.64px;width:358.60px;height:25.26px;background:#343434;"></div>
<span class="t" style="left:16.60px;top:609.34px;font-size:15.40px;line-height:22px;color:#bcbcbc;letter-spacing:-0.454px;-webkit-text-stroke:0.12px #bcbcbc;">PointerOverEvent</span>
<div style="left:275.00px;top:613.04px;width:45.60px;height:20.90px;background:transparent;border:2.00px solid #457c7f;box-sizing:border-box;border-radius:3.20px;"></div>
<span class="t" style="left:292.41px;top:612.78px;font-size:15.80px;line-height:22px;color:#909090;-webkit-text-stroke:0.32px #909090;">2</span>
<div style="left:325.20px;top:611.04px;width:17.00px;height:17.20px;background:#262626;border-radius:3.00px;"></div>
<svg style="left:327.40px;top:613.84px" width="12.80" height="12.00" viewBox="0 0 68 64"><path d="M8 34L26 52L60 12" fill="none" stroke="#e6e6e6" stroke-width="14"/></svg>
<div style="left:0.00px;top:634.80px;width:358.60px;height:25.26px;background:#3a3a3a;"></div>
<span class="t" style="left:16.60px;top:634.50px;font-size:15.40px;line-height:22px;color:#bcbcbc;letter-spacing:-0.445px;-webkit-text-stroke:0.12px #bcbcbc;">PointerOverLinkTagEvent</span>
<div style="left:325.20px;top:636.20px;width:17.00px;height:17.20px;background:#262626;border-radius:3.00px;"></div>
<svg style="left:327.40px;top:639.00px" width="12.80" height="12.00" viewBox="0 0 68 64"><path d="M8 34L26 52L60 12" fill="none" stroke="#e6e6e6" stroke-width="14"/></svg>
<div style="left:0.00px;top:659.96px;width:358.60px;height:25.26px;background:#343434;"></div>
<span class="t" style="left:16.60px;top:659.66px;font-size:15.40px;line-height:22px;color:#bcbcbc;letter-spacing:-0.420px;-webkit-text-stroke:0.12px #bcbcbc;">PointerStationaryEvent</span>
<div style="left:325.20px;top:661.36px;width:17.00px;height:17.20px;background:#262626;border-radius:3.00px;"></div>
<svg style="left:327.40px;top:664.16px" width="12.80" height="12.00" viewBox="0 0 68 64"><path d="M8 34L26 52L60 12" fill="none" stroke="#e6e6e6" stroke-width="14"/></svg>
<div style="left:0.00px;top:685.12px;width:358.60px;height:25.26px;background:#3a3a3a;"></div>
<span class="t" style="left:16.60px;top:684.82px;font-size:15.40px;line-height:22px;color:#bcbcbc;letter-spacing:-0.465px;-webkit-text-stroke:0.12px #bcbcbc;">PointerUpEvent</span>
<div style="left:275.00px;top:688.52px;width:45.60px;height:20.90px;background:transparent;border:2.00px solid #457c7f;box-sizing:border-box;border-radius:3.20px;"></div>
<span class="t" style="left:292.41px;top:688.26px;font-size:15.80px;line-height:22px;color:#909090;-webkit-text-stroke:0.32px #909090;">6</span>
<div style="left:325.20px;top:686.52px;width:17.00px;height:17.20px;background:#262626;border-radius:3.00px;"></div>
<svg style="left:327.40px;top:689.32px" width="12.80" height="12.00" viewBox="0 0 68 64"><path d="M8 34L26 52L60 12" fill="none" stroke="#e6e6e6" stroke-width="14"/></svg>
<div style="left:0.00px;top:710.28px;width:358.60px;height:25.26px;background:#343434;"></div>
<span class="t" style="left:16.60px;top:709.98px;font-size:15.40px;line-height:22px;color:#bcbcbc;letter-spacing:-0.451px;-webkit-text-stroke:0.12px #bcbcbc;">PointerUpLinkTagEvent</span>
<div style="left:325.20px;top:711.68px;width:17.00px;height:17.20px;background:#262626;border-radius:3.00px;"></div>
<svg style="left:327.40px;top:714.48px" width="12.80" height="12.00" viewBox="0 0 68 64"><path d="M8 34L26 52L60 12" fill="none" stroke="#e6e6e6" stroke-width="14"/></svg>
<div style="left:0.00px;top:735.44px;width:358.60px;height:25.26px;background:#3a3a3a;"></div>
<span class="t" style="left:11.80px;top:732.90px;font-size:20.80px;line-height:29px;color:#cfcfcf;letter-spacing:0.105px;-webkit-text-stroke:0.14px #cfcfcf;">Transition Events</span>
<div style="left:325.20px;top:736.84px;width:17.00px;height:17.20px;background:#262626;border-radius:3.00px;"></div>
<div style="left:0.00px;top:760.60px;width:358.60px;height:25.26px;background:#343434;"></div>
<span class="t" style="left:16.60px;top:760.30px;font-size:15.40px;line-height:22px;color:#bcbcbc;letter-spacing:-0.432px;-webkit-text-stroke:0.12px #bcbcbc;">TransitionCancelEvent</span>
<div style="left:325.20px;top:762.00px;width:17.00px;height:17.20px;background:#262626;border-radius:3.00px;"></div>
<div style="left:0.00px;top:785.76px;width:358.60px;height:25.26px;background:#3a3a3a;"></div>
<span class="t" style="left:16.60px;top:785.46px;font-size:15.40px;line-height:22px;color:#bcbcbc;letter-spacing:-0.441px;-webkit-text-stroke:0.12px #bcbcbc;">TransitionEndEvent</span>
<div style="left:325.20px;top:787.16px;width:17.00px;height:17.20px;background:#262626;border-radius:3.00px;"></div>
<div style="left:0.00px;top:810.92px;width:358.60px;height:25.26px;background:#343434;"></div>
<span class="t" style="left:16.60px;top:810.62px;font-size:15.40px;line-height:22px;color:#bcbcbc;letter-spacing:-0.444px;-webkit-text-stroke:0.12px #bcbcbc;">TransitionRunEvent</span>
<div style="left:325.20px;top:812.32px;width:17.00px;height:17.20px;background:#262626;border-radius:3.00px;"></div>
<div style="left:0.00px;top:836.08px;width:358.60px;height:25.26px;background:#3a3a3a;"></div>
<span class="t" style="left:16.60px;top:835.78px;font-size:15.40px;line-height:22px;color:#bcbcbc;letter-spacing:-0.410px;-webkit-text-stroke:0.12px #bcbcbc;">TransitionStartEvent</span>
<div style="left:325.20px;top:837.48px;width:17.00px;height:17.20px;background:#262626;border-radius:3.00px;"></div>
<div style="left:358.60px;top:0.00px;width:16.40px;height:880.00px;background:#313131;"></div>
<div style="left:361.60px;top:511.80px;width:12.60px;height:227.60px;background:#5c5c5c;border-radius:6.20px;"></div>
<svg style="left:362.60px;top:7.20px" width="9.60" height="6.00" viewBox="0 0 10 6"><path d="M0.2 5.7h9.6L5 0.1z" fill="#e6e6e6"/></svg>
<svg style="left:362.40px;top:847.60px" width="9.60" height="6.00" viewBox="0 0 10 6"><path d="M0.2 0.3h9.6L5 5.9z" fill="#e6e6e6"/></svg>
</div>
</div>
</div>
<div style="left:0.00px;top:939.20px;width:1700.00px;height:12.80px;background:#282828;"></div>
<div style="left:0.00px;top:939.20px;width:1700.00px;height:4.40px;background:#2f2f2f;"></div>
<div style="left:1239.20px;top:941.20px;width:2.40px;height:12.00px;background:#181818;"></div>
</div>
</body></html>
